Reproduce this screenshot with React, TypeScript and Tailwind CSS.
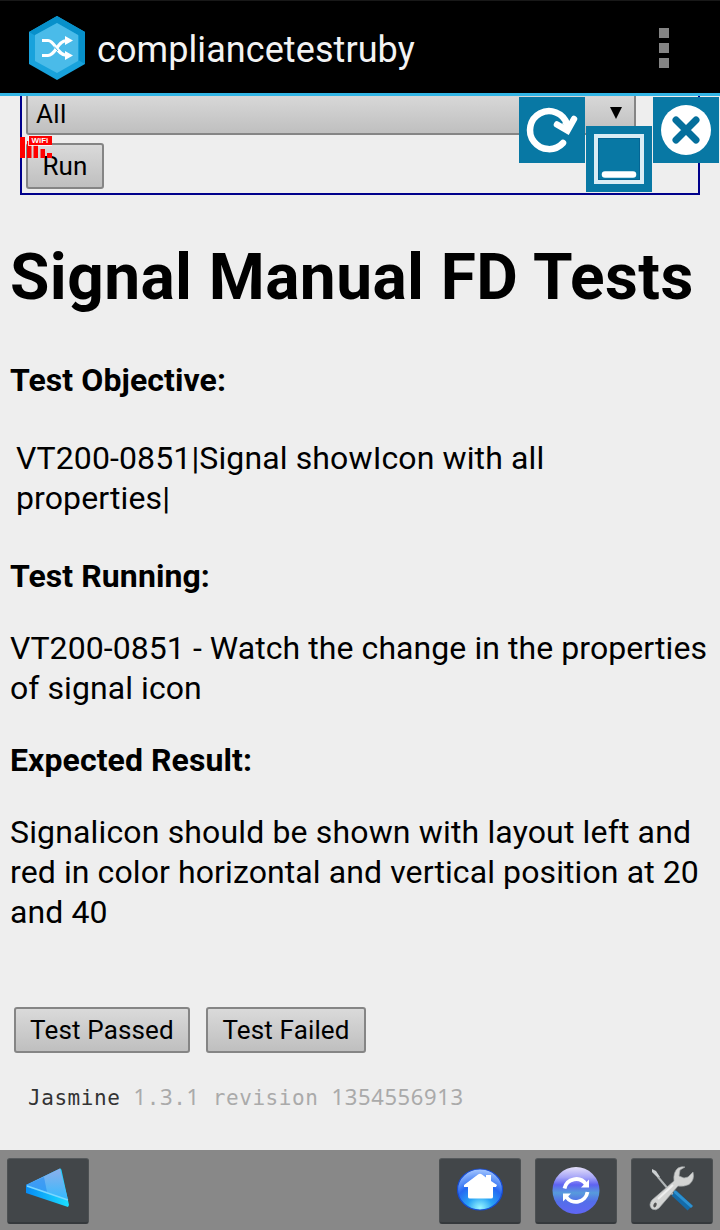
import type { ReactNode } from "react";

const buttonFace =
  "flex items-center justify-center rounded-[3px] border-2 border-[#858585] bg-linear-to-b from-[#dadada] to-[#bfbfbf] font-[Roboto,sans-serif] text-[26px] leading-none tracking-[0.15px] text-black";

function ActionBar() {
  return (
    <header className="flex h-24 shrink-0 items-center border-b-[3px] border-[#33b5e5] border-t border-t-[#181818] bg-black pl-7 pr-[51px] pt-0.5">
      <svg className="h-16 w-[58px]" viewBox="0 0 58 64">
        <path d="M29 0 57 16V48L29 64 1 48V16Z" fill="#18a2dc" />
        <path d="M29 0 57 16V48L51 44.5V19.5L29 7 7 19.5 1 16Z" fill="#0790ca" />
        <path d="M29 7 50 19V45L29 57 7 45V19Z" fill="#4abbe9" />
        <g fill="none" stroke="#fff" strokeWidth="3.2">
          <path d="M14 24.5h6c7 0 9 15 19 15h3M14 39.5h6c8 0 9-15 19-15h3" />
        </g>
        <path d="M37 20 45 24.5 37 29ZM37 35 45 39.5 37 44Z" fill="#fff" />
        <path d="M26 30.500 30 35" stroke="#4abbe9" strokeWidth="1" />
      </svg>
      <h1 className="ml-[11px] mt-1 flex-1 whitespace-nowrap text-[36px] leading-none tracking-[0.08px] text-[#f3f3f3]">
        compliancetestruby
      </h1>
      <div className="flex flex-col gap-[5px]">
        <i className="size-2.5 bg-[#858585]" />
        <i className="size-2.5 bg-[#858585]" />
        <i className="size-2.5 bg-[#858585]" />
      </div>
    </header>
  );
}

function SignalIcon() {
  return (
    <div className="absolute left-5 top-10 h-[22px] w-8">
      <svg className="absolute inset-0 h-[22px] w-8" viewBox="0 0 32 22" fill="#f00">
        <path d="M0 1h5v21H0zM7 5h4.500v17H7zM13.500 8h4.500v14h-4.500zM20.500 13h4.500v9h-4.500zM27 17h5v5h-5z" />
        <path d="M8 0h24v10H8z" fill="#fff" opacity=".8" />
        <path d="M9 0h23v9H9z" />
      </svg>
      <span className="absolute left-[11.500px] top-0 font-['Liberation_Sans',sans-serif] text-[8px] font-bold leading-[9px] text-white">
        WiFi
      </span>
    </div>
  );
}

function FloatingControls() {
  return (
    <>
      <svg className="absolute left-[519px] top-px size-[66px]" viewBox="0 0 66 66">
        <path d="M0 0h66v66H0z" fill="#0878a4" />
        <path
          d="M44 46A19 19 0 1 1 48 27"
          fill="none"
          stroke="#fff"
          strokeWidth="6.500"
          strokeLinecap="round"
        />
        <path d="M38 27.500 48.500 33.500 55 22" fill="none" stroke="#fff" strokeWidth="6.500" strokeLinecap="round" strokeLinejoin="miter" />
        <path d="M43 26 48 24 51 27 49 33Z" fill="#fff" />
      </svg>
      <svg className="absolute left-[653px] top-px size-[66px]" viewBox="0 0 66 66">
        <path d="M0 0h66v66H0z" fill="#0878a4" />
        <circle cx="33" cy="33" r="25" fill="#fff" />
        <path d="M23 23 43 43M43 23 23 43" stroke="#056f9c" strokeWidth="7" strokeLinecap="round" />
      </svg>
      <svg className="absolute left-[586px] top-[30px] size-[66px]" viewBox="0 0 66 66">
        <path d="M0 0h66v66H0z" fill="#0878a4" />
        <rect x="10" y="10" width="46" height="46" fill="none" stroke="#d9edf5" strokeWidth="4" />
        <rect x="12.500" y="12.500" width="41" height="41" fill="none" stroke="#046594" strokeWidth="1" />
        <path d="M19 48.500H47" stroke="#fff" strokeWidth="6.500" strokeLinecap="round" />
      </svg>
    </>
  );
}

function FilterPanel() {
  return (
    <section className="relative h-[99px]">
      <div className="mx-5 flex h-[99px] flex-col gap-2 border-2 border-t-0 border-[#00008b] pl-1">
        <div className="flex h-[39px] w-[610px] items-center justify-between rounded-b-[3px] border-2 border-t-0 border-[#858585] bg-linear-to-b from-[#d8d8d8] to-[#bfbfbf] pl-2 pr-3 text-[26px] leading-none tracking-[0.3px]">
          <span className="mb-0.5">All</span>
          <svg className="mb-1 h-3 w-3" viewBox="0 0 12 12">
            <path d="M0 0h12L6 12Z" />
          </svg>
        </div>
        <button className={`${buttonFace} h-[46px] w-[78px]`}>Run</button>
      </div>
      <FloatingControls />
      <SignalIcon />
    </section>
  );
}

function Label({ children }: { children: ReactNode }) {
  return <h3 className="text-[32px] font-bold leading-10 tracking-[0.08px]">{children}</h3>;
}

function NavButton({ children }: { children: ReactNode }) {
  return (
    <button className="flex h-[66px] w-[82px] justify-center rounded-[3px] border border-b-2 border-[#4d5153] border-b-[#35393c] border-t-[#55595c] bg-[#424649]">
      <svg className="h-[63px] w-20" viewBox="0 0 80 63">
        {children}
      </svg>
    </button>
  );
}

function NavBar() {
  return (
    <footer className="flex h-20 shrink-0 gap-3.5 bg-[#888] pl-[7px] pr-[7px] pt-2">
      <div className="flex-1">
        <NavButton>
          <defs>
            <linearGradient id="arrowFace" x1=".6" y1="0" x2=".6" y2="1">
              <stop stopColor="#8eafea" />
              <stop offset="1" stopColor="#32baff" />
            </linearGradient>
            <linearGradient id="arrowEdge">
              <stop stopColor="#078bf5" />
              <stop offset="1" stopColor="#1bdfff" />
            </linearGradient>
          </defs>
          <path d="M18 26 52 9.500Q53 9 53.500 11L61 46 60 48 18 34Z" fill="url(#arrowEdge)" />
          <path d="M18 26 52 9.500 60 41Z" fill="url(#arrowFace)" />
          <path d="M18 26 36 18 39 33Z" fill="#248cf4" opacity=".6" />
          <path d="M19 27 60 41" stroke="#7ad7ff" strokeWidth="1.500" />
        </NavButton>
      </div>
      <NavButton>
        <defs>
          <radialGradient id="homeGlow" cx=".5" cy=".95" r=".95">
            <stop stopColor="#9af7ff" />
            <stop offset=".3" stopColor="#28a3f5" />
            <stop offset=".6" stopColor="#2468f2" />
            <stop offset="1" stopColor="#a7c8ff" />
          </radialGradient>
        </defs>
        <ellipse cx="40" cy="30.500" rx="22.500" ry="20.500" fill="url(#homeGlow)" stroke="#164bd2" strokeWidth="1.200" />
        <path d="M24 26 38 15.500Q40 14 42 15.500L46 18.500V16H51V22L57 26 56 28H53V38Q53 39.500 51 39.500H30Q28 39.500 28 38V28H24Z" fill="#fff" />
      </NavButton>
      <NavButton>
        <defs>
          <linearGradient id="syncBall" x1="0" y1="0" x2="0" y2="1">
            <stop stopColor="#e5e0fa" />
            <stop offset=".22" stopColor="#a6a5f8" />
            <stop offset=".38" stopColor="#5e62f2" />
            <stop offset=".55" stopColor="#579bdc" />
            <stop offset=".73" stopColor="#536ee9" />
            <stop offset="1" stopColor="#6066f5" />
          </linearGradient>
        </defs>
        <circle cx="40" cy="31.500" r="23.500" fill="url(#syncBall)" />
        <path d="M28.500 29.500A11.800 11.800 0 0 1 50 25.500M51.500 33A11.800 11.800 0 0 1 30 37.500" fill="none" stroke="#fff" strokeWidth="3.800" />
        <path d="M53 20.500V28.500H45ZM27 42.500V34.500H35Z" fill="#fff" />
      </NavButton>
      <NavButton>
        <path d="M20 10 24 12 28 18 26 19 20 13Z" fill="#ccd0d2" />
        <path d="M26 18 42 37" stroke="#b1b6b8" strokeWidth="2" />
        <path d="M42 34 58 49" stroke="#146ba9" strokeWidth="7" />
        <path d="M42 32 60 48" stroke="#2c91d1" strokeWidth="3" />
        <path
          d="M53 8 48 11 47 17 52 19 56 18 61 13Q63 21 57 25.500 52 28 46 27L27 49Q24 52 20 50 16 46 20 41L42 22Q41 13 46 9 50 7 53 8Z"
          fill="#d3d4d3"
          stroke="#a4a8a9"
          strokeWidth=".7"
        />
        <path d="M26 40 41 26" stroke="#eee" strokeWidth="2" />
        <ellipse cx="23" cy="46" rx="1.500" ry="2.500" fill="#555" transform="rotate(25 23 46)" />
      </NavButton>
    </footer>
  );
}

function Version() {
  const digits = "font-['Noto_Sans',sans-serif] tracking-[0.620px]";
  return (
    <p className="mt-[29px] flex h-7 items-baseline whitespace-pre pl-7 font-['DejaVu_Sans_Mono',monospace] text-[21px] leading-7 tracking-[0.550px] text-[#333]">
      <span>Jasmine </span>
      <span className="text-[#aaa]">
        <span className={`${digits} text-[22px]`}>1</span>.
        <span className={`${digits} text-[22px]`}>3</span>.
        <span className={`${digits} text-[22px]`}>1</span> revision{" "}
        <span className={`${digits} text-[22px]`}>1354556913</span>
      </span>
    </p>
  );
}

export default function App() {
  return (
    <div className="flex h-[1230px] w-[720px] flex-col overflow-hidden bg-[#eee] font-[Roboto,sans-serif] text-black">
      <ActionBar />
      <main className="flex-1">
        <FilterPanel />
        <div className="whitespace-nowrap pl-2.5 text-[32px] leading-10">
          <h2 className="mt-[43px] text-[64px] font-bold leading-[80px] tracking-[0.410px]">Signal Manual FD Tests</h2>
          <div className="mt-[42px]">
            <Label>Test Objective:</Label>
          </div>
          <p className="mt-[38px] pl-1.5 tracking-[0.120px]">
            VT200-0851|Signal showIcon with all
            <br />
            properties|
          </p>
          <div className="mt-[38px]">
            <Label>Test Running:</Label>
          </div>
          <p className="mt-8 tracking-[0.070px]">
            VT200-0851 - Watch the change in the properties
            <br />
            of signal icon
          </p>
          <div className="mt-8">
            <Label>Expected Result:</Label>
          </div>
          <p className="mt-8 tracking-[0.100px]">
            <span className="tracking-[0.150px]">Signalicon should be shown with layout left and</span>
            <br />
            red in color horizontal and vertical position at 20
            <br />
            and 40
          </p>
        </div>
        <div className="mt-[75px] flex gap-4 pl-3.5">
          <button className={`${buttonFace} h-[46px] w-44`}>Test Passed</button>
          <button className={`${buttonFace} h-[46px] w-40`}>Test Failed</button>
        </div>
        <Version />
      </main>
      <NavBar />
    </div>
  );
}
